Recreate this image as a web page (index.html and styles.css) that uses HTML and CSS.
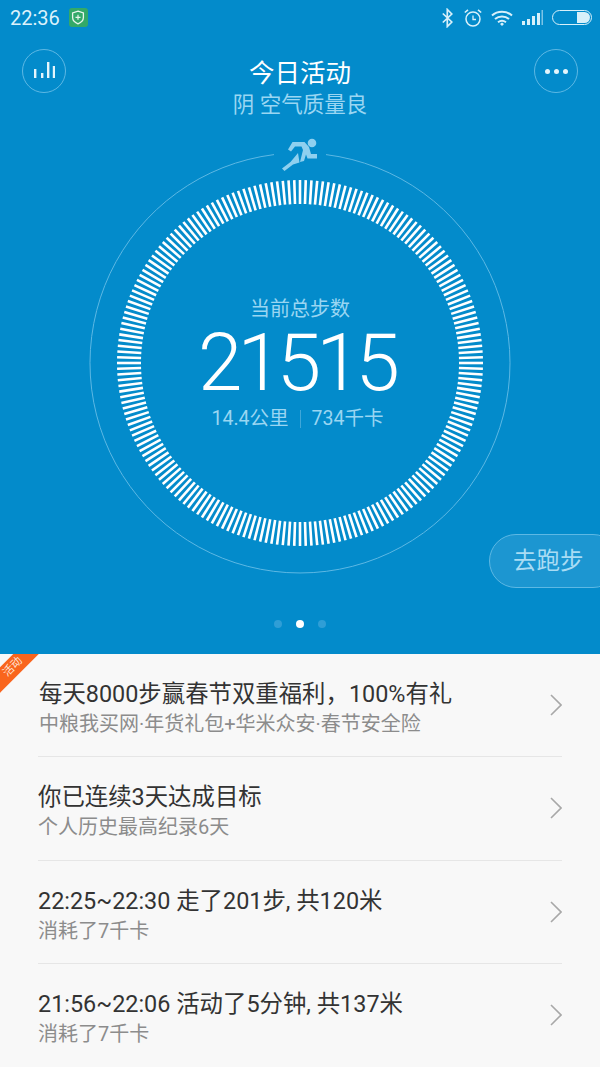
FILE: index.html
```html
<!DOCTYPE html>
<html lang="zh-CN">
<head>
    <meta charset="UTF-8">
    <meta name="viewport" content="width=device-width, initial-scale=1.0">
    <title>今日活动</title>
    <link rel="stylesheet" href="styles.css">
</head>
<body>
    <section class="hero">
        <div class="statusbar">
            <div class="status-left">
                <span class="clock">22:36</span>
                <span class="shield">
                    <svg width="14" height="15" viewBox="0 0 14 15"><path d="M7 1.2 12.4 3v4.4c0 3-2.300 5-5.400 6.400C3.900 12.400 1.600 10.400 1.600 7.400V3z" fill="none" stroke="#e8f6ec" stroke-width="1.300"/><path d="M7 4.800v5M4.500 7.300h5" stroke="#e8f6ec" stroke-width="1.200"/></svg>
                </span>
            </div>
            <div class="status-right">
                <svg class="ic-bt" width="11" height="20" viewBox="0 0 11 20"><path d="M.8 5.500 9.800 14 5.300 18.500V1.500L9.800 6 .8 14.500" fill="none" stroke="#d8f0fa" stroke-width="1.700"/></svg>
                <svg class="ic-alarm" width="18" height="20" viewBox="0 0 18 20"><circle cx="9" cy="11" r="7" fill="none" stroke="#d8f0fa" stroke-width="1.500"/><path d="M9 7.500V11.500H12" fill="none" stroke="#d8f0fa" stroke-width="1.300"/><path d="M.8 4.500 4 1.800M17.200 4.500 14 1.800" stroke="#d8f0fa" stroke-width="1.600"/></svg>
                <svg class="ic-wifi" width="22" height="16" viewBox="0 0 22 16"><path d="M1 5.500C6.500.500 15.500.500 21 5.500M4 9C8 5.500 14 5.500 18 9M7 12.200C9.500 10.400 12.500 10.400 15 12.200" fill="none" stroke="#d8f0fa" stroke-width="2"/><path d="M9 14 11 12.500 13 14 11 16z" fill="#d8f0fa"/></svg>
                <svg class="ic-signal" width="21" height="16" viewBox="0 0 21 16"><rect x="0" y="11" width="3" height="4" fill="#d8f0fa"/><rect x="5" y="9" width="3" height="6" fill="#d8f0fa"/><rect x="10" y="6" width="3" height="9" fill="#d8f0fa"/><rect x="15" y="3" width="3" height="12" fill="#d8f0fa"/><rect x="19.500" y="0" width="1.500" height="15" fill="#7cc4e6"/></svg>
                <span class="battery"><span class="battery-level"></span></span>
            </div>
        </div>

        <div class="topbar">
            <span class="round-btn">
                <svg class="ic-chart" width="21" height="17" viewBox="0 0 21 17"><path d="M1.200 8V17M8.200 12V17M14.200 1V17M20 5V17" stroke="#e4f5fc" stroke-width="2.400" fill="none"/></svg>
            </span>
            <div class="title-block">
                <h1>今日活动</h1>
                <p>阴 空气质量良</p>
            </div>
            <span class="round-btn">
                <span class="dots"><i></i><i></i><i></i></span>
            </span>
        </div>

        <div class="gauge">
            <svg class="gauge-ring" width="424" height="424" viewBox="0 0 424 424">
                <path d="M186 3.600A210 210 0 1 0 238 3.600" fill="none" stroke="#5db8e4" stroke-width="1"/>
                <g id="ticks" class="ticks"></g>
            </svg>
            <svg class="runner" width="38" height="34" viewBox="0 0 38 34">
                <circle cx="31" cy="5" r="4.300" fill="#8fd0ef"/>
                <path d="M7 11.500 11.500 4H23.500L28 9 30 16H36V20.500H26.500L25 16.500 23 23 19 24 22 12 20.500 8.500H14L10 13.500z" fill="#8fd0ef"/>
                <path d="M17 15 18.500 24.500 12 26.500 3.500 33 1 30.500 9.500 24z" fill="#8fd0ef"/>
            </svg>
            <div class="readout">
                <div class="readout-label">当前总步数</div>
                <div class="readout-value">21515</div>
                <div class="readout-meta">
                    <span class="meta-left">14.4公里</span>
                    <span class="meta-sep"></span>
                    <span>734千卡</span>
                </div>
            </div>
        </div>

        <span class="run-btn">去跑步</span>

        <div class="pager"><i></i><i class="active"></i><i></i></div>
    </section>

    <section class="feed">
        <span class="ribbon"><span>活动</span></span>
        <div class="feed-row feed-row-first">
            <div class="feed-text">
                <div class="feed-title">每天8000步赢春节双重福利，100%有礼</div>
                <div class="feed-sub">中粮我买网·年货礼包+华米众安·春节安全险</div>
            </div>
            <svg class="chevron" width="12" height="22" viewBox="0 0 12 22"><path d="M1 1 11 11 1 21" fill="none" stroke="#a8a8a8" stroke-width="1.600"/></svg>
        </div>
        <div class="feed-row">
            <div class="feed-text">
                <div class="feed-title">你已连续3天达成目标</div>
                <div class="feed-sub">个人历史最高纪录6天</div>
            </div>
            <svg class="chevron" width="12" height="22" viewBox="0 0 12 22"><path d="M1 1 11 11 1 21" fill="none" stroke="#a8a8a8" stroke-width="1.600"/></svg>
        </div>
        <div class="feed-row">
            <div class="feed-text">
                <div class="feed-title">22:25~22:30 走了201步, 共120米</div>
                <div class="feed-sub">消耗了7千卡</div>
            </div>
            <svg class="chevron" width="12" height="22" viewBox="0 0 12 22"><path d="M1 1 11 11 1 21" fill="none" stroke="#a8a8a8" stroke-width="1.600"/></svg>
        </div>
        <div class="feed-row">
            <div class="feed-text">
                <div class="feed-title">21:56~22:06 活动了5分钟, 共137米</div>
                <div class="feed-sub">消耗了7千卡</div>
            </div>
            <svg class="chevron" width="12" height="22" viewBox="0 0 12 22"><path d="M1 1 11 11 1 21" fill="none" stroke="#a8a8a8" stroke-width="1.600"/></svg>
        </div>
    </section>

    <script src="ticks.js"></script>
</body>
</html>
```

FILE: styles.css
```css
* {
    box-sizing: border-box;
}
html, body {
    margin: 0;
    padding: 0;
}
body {
    width: 600px;
    height: 1067px;
    overflow: hidden;
    background-color: #f8f8f8;
    font-family: Roboto, "Noto Sans CJK SC", sans-serif;
}
.hero {
    position: relative;
    height: 654px;
    background-color: #038bcb;
    color: #fff;
}
.statusbar {
    height: 35px;
    padding: 0 8px 0 10px;
    display: flex;
    justify-content: space-between;
    align-items: center;
}
.status-left, .status-right {
    display: flex;
    align-items: center;
}
.clock {
    font-size: 20px;
    color: #dcf2fb;
}
.shield {
    width: 19px;
    height: 19px;
    margin-left: 9px;
    border-radius: 3px;
    background-color: #33a968;
    display: flex;
    align-items: center;
    justify-content: center;
}
.status-right {
    gap: 9px;
}
.ic-alarm {
    margin-left: 2px;
}
.battery {
    width: 40px;
    height: 15px;
    border: 1.500px solid #d8f0fa;
    border-radius: 8px;
    display: flex;
    justify-content: flex-end;
    padding: 1px;
}
.battery-level {
    width: 13px;
    background-color: #d8f0fa;
    border-radius: 0 6px 6px 0;
}
.topbar {
    height: 87px;
    padding: 14px 22px 0 22px;
    display: flex;
    justify-content: space-between;
    align-items: flex-start;
}
.round-btn {
    width: 44px;
    height: 44px;
    border: 1px solid #5db8e4;
    border-radius: 50%;
    display: flex;
    align-items: center;
    justify-content: center;
}
.ic-chart {
    margin-top: -3px;
}
.dots {
    display: flex;
    gap: 4px;
}
.dots i {
    width: 5px;
    height: 5px;
    border-radius: 50%;
    background-color: #e4f5fc;
}
.title-block {
    text-align: center;
    margin-top: 8px;
}
.title-block h1 {
    margin: 0;
    font-size: 25.500px;
    line-height: 32px;
    font-weight: 400;
}
.title-block p {
    margin: 0;
    font-size: 21.500px;
    line-height: 32px;
    color: #9ad6f2;
}
.gauge {
    position: relative;
    width: 424px;
    height: 424px;
    margin: 29px auto 0 auto;
}
.gauge-ring {
    display: block;
}
.ticks line {
    stroke: #fff;
    stroke-width: 2.600;
}
.runner {
    position: absolute;
    left: 193px;
    top: -13px;
}
.readout {
    position: absolute;
    left: 0;
    right: 0;
    top: 145px;
    text-align: center;
}
.readout-label {
    font-size: 20px;
    line-height: 26px;
    color: #9ad6f2;
}
.readout-value {
    font-size: 80px;
    line-height: 82px;
    font-weight: 300;
    letter-spacing: -5px;
    padding-right: 7px;
}
.readout-meta {
    display: grid;
    grid-template-columns: 1fr auto 1fr;
    align-items: center;
    column-gap: 11px;
    margin-top: 3px;
    font-size: 19.500px;
    line-height: 24px;
    color: #9ad6f2;
    text-align: left;
}
.meta-left {
    text-align: right;
}
.meta-sep {
    width: 1px;
    height: 18px;
    background-color: #3fa7d9;
}
.run-btn {
    position: absolute;
    right: -20px;
    top: 534px;
    width: 131px;
    height: 54px;
    border: 1px solid #5db8e4;
    border-radius: 27px;
    background-color: #1c96d1;
    padding-left: 23px;
    font-size: 23.500px;
    line-height: 52px;
    color: #a9dcf4;
}
.pager {
    position: absolute;
    left: 0;
    right: 0;
    top: 620px;
    display: flex;
    justify-content: center;
    gap: 14px;
}
.pager i {
    width: 8px;
    height: 8px;
    border-radius: 50%;
    background-color: #2f9ed6;
}
.pager i.active {
    background-color: #fff;
}
.feed {
    position: relative;
    padding: 0 38px;
    overflow: hidden;
    height: 413px;
}
.ribbon {
    position: absolute;
    left: -37px;
    top: 3.500px;
    width: 100px;
    height: 18px;
    background-color: #f9651d;
    transform: rotate(-45deg);
    text-align: center;
}
.ribbon span {
    display: block;
    font-size: 11px;
    line-height: 18px;
    color: #ffe6da;
}
.feed-row {
    height: 103.500px;
    border-bottom: 1px solid #e6e6e6;
    display: flex;
    justify-content: space-between;
    align-items: center;
}
.feed-row-first {
    height: 103px;
}
.feed-text {
    padding-top: 5px;
}
.feed-row-first .feed-text {
    padding-left: 1px;
}
.feed-title {
    font-size: 23.400px;
    line-height: 34px;
    color: #333;
}
.feed-sub {
    font-size: 20px;
    line-height: 27px;
    color: #8c8c8c;
}
```

FILE: ticks.js
```js
// 200 radial ticks round the step ring
const ticks = document.getElementById('ticks');
const cx = 212, cy = 212, inner = 159, outer = 183, count = 200;

for (let i = 0; i < count; i++) {
    const a = i / count * 2 * Math.PI;
    const line = document.createElementNS('http://www.w3.org/2000/svg', 'line');
    line.setAttribute('x1', cx + inner * Math.sin(a));
    line.setAttribute('y1', cy - inner * Math.cos(a));
    line.setAttribute('x2', cx + outer * Math.sin(a));
    line.setAttribute('y2', cy - outer * Math.cos(a));
    ticks.appendChild(line);
}
```
